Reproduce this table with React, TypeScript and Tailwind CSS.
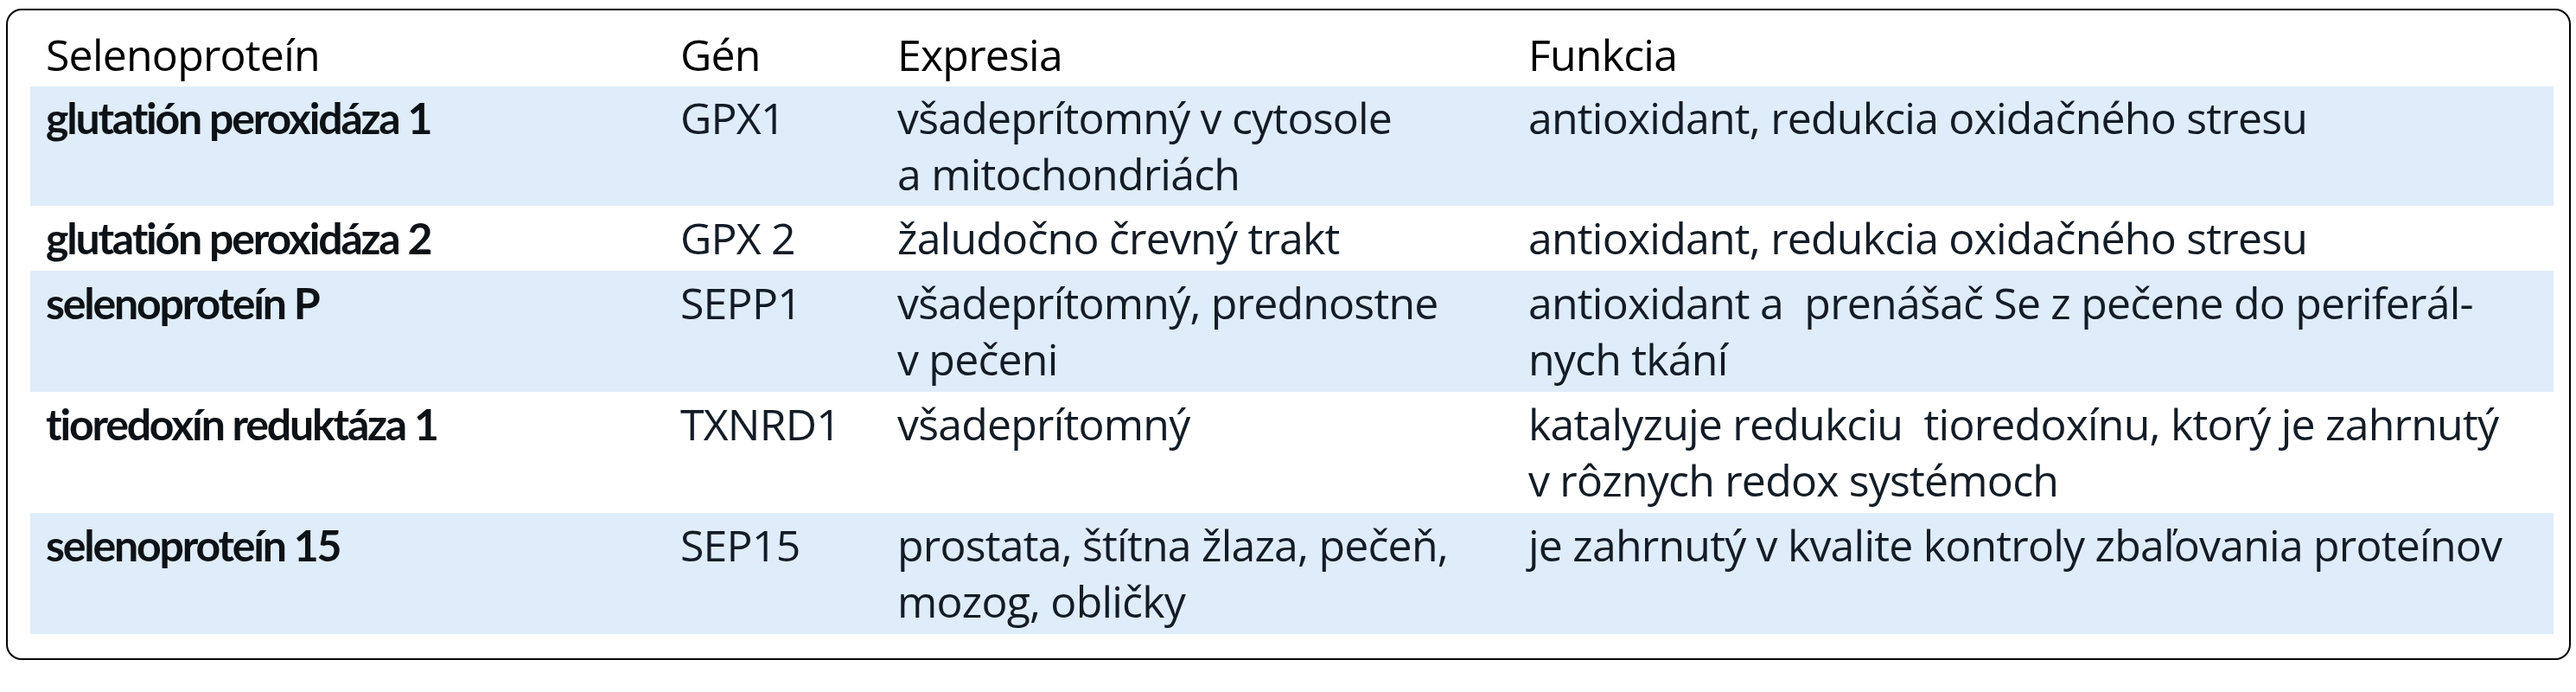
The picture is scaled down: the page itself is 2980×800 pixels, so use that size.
import React from "react";

type Row = {
  name: string;
  gene: string;
  expr: string[];
  func: string[];
  blue: boolean;
  pad: string;
};

const rows: Row[] = [
  {
    name: "glutatión peroxidáza 1",
    gene: "GPX1",
    expr: ["všadeprítomný v cytosole", "a mitochondriách"],
    func: ["antioxidant, redukcia oxidačného stresu"],
    blue: true,
    pad: "py-[4px]",
  },
  {
    name: "glutatión peroxidáza 2",
    gene: "GPX 2",
    expr: ["žaludočno črevný trakt"],
    func: ["antioxidant, redukcia oxidačného stresu"],
    blue: false,
    pad: "py-[5px]",
  },
  {
    name: "selenoproteín P",
    gene: "SEPP1",
    expr: ["všadeprítomný, prednostne", "v pečeni"],
    func: ["antioxidant a  prenášač Se z pečene do periferál-", "nych tkání"],
    blue: true,
    pad: "py-[5px]",
  },
  {
    name: "tioredoxín reduktáza 1",
    gene: "TXNRD1",
    expr: ["všadeprítomný"],
    func: ["katalyzuje redukciu  tioredoxínu, ktorý je zahrnutý", "v rôznych redox systémoch"],
    blue: false,
    pad: "py-[5px]",
  },
  {
    name: "selenoproteín 15",
    gene: "SEP15",
    expr: ["prostata, štítna žlaza, pečeň,", "mozog, obličky"],
    func: ["je zahrnutý v kvalite kontroly zbaľovania proteínov"],
    blue: true,
    pad: "py-[5px]",
  },
];

const grid = "grid grid-cols-[734px_251px_730px_1fr]";

function Lines({ lines }: { lines: string[] }) {
  return (
    <>
      {lines.map((l, i) => (
        <div key={i} className="whitespace-pre">
          {l}
        </div>
      ))}
    </>
  );
}

export default function App() {
  return (
    <div className="w-[2980px] h-[800px] bg-white overflow-hidden">
      <div
        className="ml-[7px] mt-[10px] w-[2967px] h-[753px] border-2 border-black rounded-[18px] pl-[26px] pr-[18px] pt-[19px] font-['Open_Sans','Noto_Sans',sans-serif]"
      >
        <div className={`${grid} text-[50px] leading-[65px] text-black font-medium pb-[4px] tracking-[-0.8px]`}>
          <div className="pl-[18px] whitespace-nowrap">Selenoproteín</div>
          <div className="pl-[18px] whitespace-nowrap">Gén</div>
          <div className="pl-[18px] whitespace-nowrap">Expresia</div>
          <div className="pl-[18px] whitespace-nowrap">Funkcia</div>
        </div>
        {rows.map((r, i) => (
          <div
            key={i}
            className={`${grid} ${r.pad} text-[50px] leading-[65px] text-[#131c26] tracking-[-0.8px] ${
              r.blue ? "bg-[#dfecf9]" : "bg-white"
            }`}
          >
            <div className="pl-[18px] whitespace-nowrap font-bold text-[#0d1217] font-['Lato','Open_Sans',sans-serif] tracking-[-2.2px]">
              {r.name}
            </div>
            <div className="pl-[18px] whitespace-nowrap">{r.gene}</div>
            <div className="pl-[18px]">
              <Lines lines={r.expr} />
            </div>
            <div className="pl-[18px]">
              <Lines lines={r.func} />
            </div>
          </div>
        ))}
      </div>
    </div>
  );
}
